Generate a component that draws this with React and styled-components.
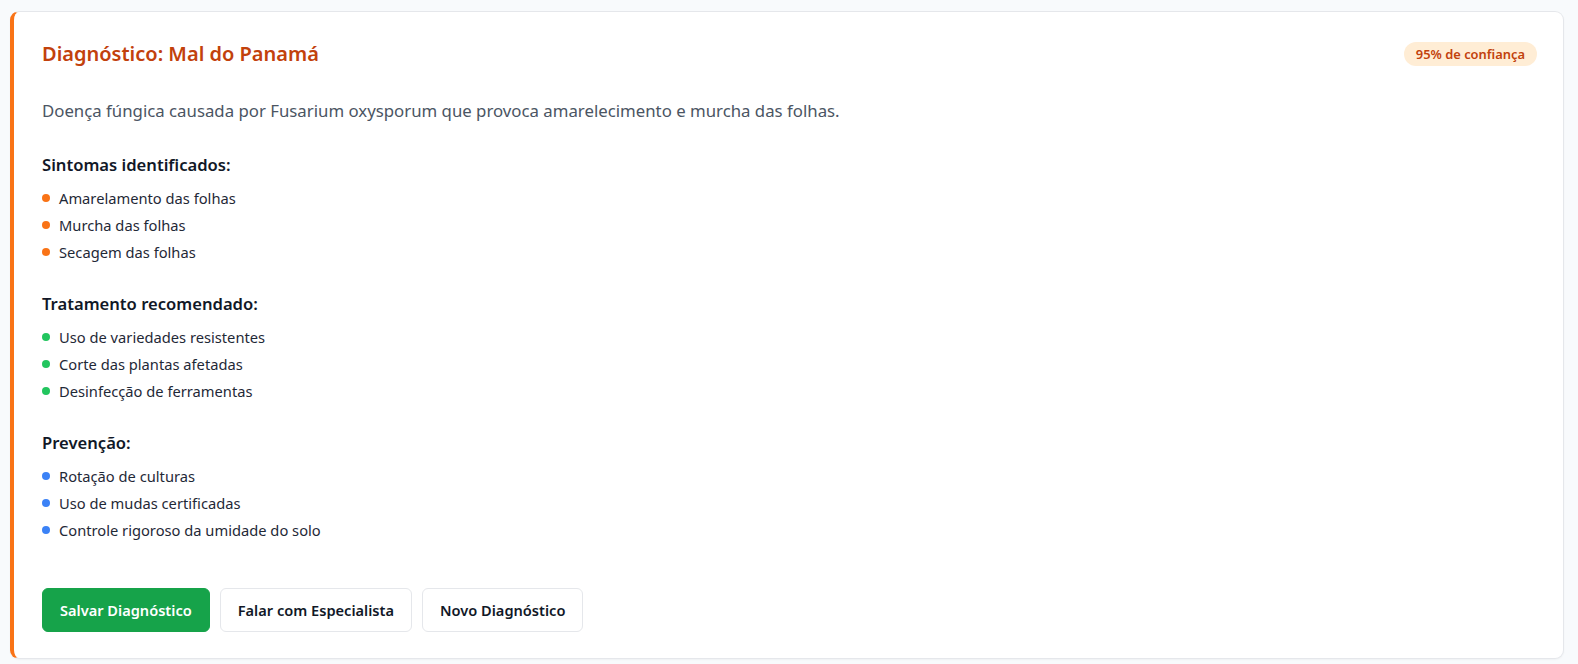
import React from "react";
import styled, { createGlobalStyle } from "styled-components";

const GlobalStyle = createGlobalStyle`
  html, body {
    margin: 0;
    padding: 0;
    background: #f8fafc;
    font-family: "Noto Sans", "Open Sans", sans-serif;
  }
`;

const Page = styled.div`
  padding: 11px 14px 4px 10px;
`;

const Card = styled.section`
  background: #ffffff;
  border: 1px solid #e5e7eb;
  border-left: 4px solid #f97316;
  border-radius: 9px;
  box-shadow: 0 1px 2px rgba(0, 0, 0, 0.04);
  padding: 28px 26px 26px 28px;
`;

const Header = styled.div`
  display: flex;
  align-items: center;
  justify-content: space-between;
  margin-bottom: 31px;
`;

const Title = styled.h2`
  margin: 0;
  font-size: 20px;
  line-height: 28px;
  font-weight: 600;
  color: #c2410c;
`;

const Badge = styled.span`
  display: inline-flex;
  align-items: center;
  height: 24px;
  padding: 0 12px;
  border-radius: 999px;
  background: #ffedd5;
  color: #c2410c;
  font-size: 12.9px;
  font-weight: 600;
`;

const Description = styled.p`
  margin: 0 0 30px;
  font-size: 16.8px;
  line-height: 24px;
  color: #4b5563;
`;

const Section = styled.div`
  margin-bottom: 30px;
`;

const SectionTitle = styled.h3`
  margin: 0 0 11px;
  font-size: 16.6px;
  line-height: 24px;
  font-weight: 600;
  color: #111827;
`;

const List = styled.ul`
  list-style: none;
  margin: 0;
  padding: 0;
  display: flex;
  flex-direction: column;
  gap: 7px;
`;

const Item = styled.li`
  display: flex;
  align-items: center;
  gap: 9px;
  font-size: 14.7px;
  line-height: 20px;
  color: #1f2937;
`;

const Dot = styled.span`
  width: 8px;
  height: 8px;
  border-radius: 50%;
  background: ${({ color }) => color};
  flex-shrink: 0;
`;

const Actions = styled.div`
  display: flex;
  gap: 10px;
  margin-top: 48px;
`;

const Button = styled.button`
  height: 44px;
  padding: 0 17px;
  border-radius: 6px;
  font-family: inherit;
  font-size: 14.6px;
  font-weight: 600;
  cursor: pointer;
  border: 1px solid ${({ primary }) => (primary ? "#16a34a" : "#e5e7eb")};
  background: ${({ primary }) => (primary ? "#16a34a" : "#ffffff")};
  color: ${({ primary }) => (primary ? "#ffffff" : "#111827")};
`;

const sections = [
  {
    title: "Sintomas identificados:",
    color: "#f97316",
    items: ["Amarelamento das folhas", "Murcha das folhas", "Secagem das folhas"],
  },
  {
    title: "Tratamento recomendado:",
    color: "#22c55e",
    items: [
      "Uso de variedades resistentes",
      "Corte das plantas afetadas",
      "Desinfecção de ferramentas",
    ],
  },
  {
    title: "Prevenção:",
    color: "#3b82f6",
    items: [
      "Rotação de culturas",
      "Uso de mudas certificadas",
      "Controle rigoroso da umidade do solo",
    ],
  },
];

const App = () => {
  return (
    <Page>
      <GlobalStyle />
      <Card>
        <Header>
          <Title>Diagnóstico: Mal do Panamá</Title>
          <Badge>95% de confiança</Badge>
        </Header>
        <Description>
          Doença fúngica causada por Fusarium oxysporum que provoca amarelecimento e
          murcha das folhas.
        </Description>
        {sections.map((s) => (
          <Section key={s.title}>
            <SectionTitle>{s.title}</SectionTitle>
            <List>
              {s.items.map((item) => (
                <Item key={item}>
                  <Dot color={s.color} />
                  {item}
                </Item>
              ))}
            </List>
          </Section>
        ))}
        <Actions>
          <Button primary>Salvar Diagnóstico</Button>
          <Button>Falar com Especialista</Button>
          <Button>Novo Diagnóstico</Button>
        </Actions>
      </Card>
    </Page>
  );
};

export default App;
